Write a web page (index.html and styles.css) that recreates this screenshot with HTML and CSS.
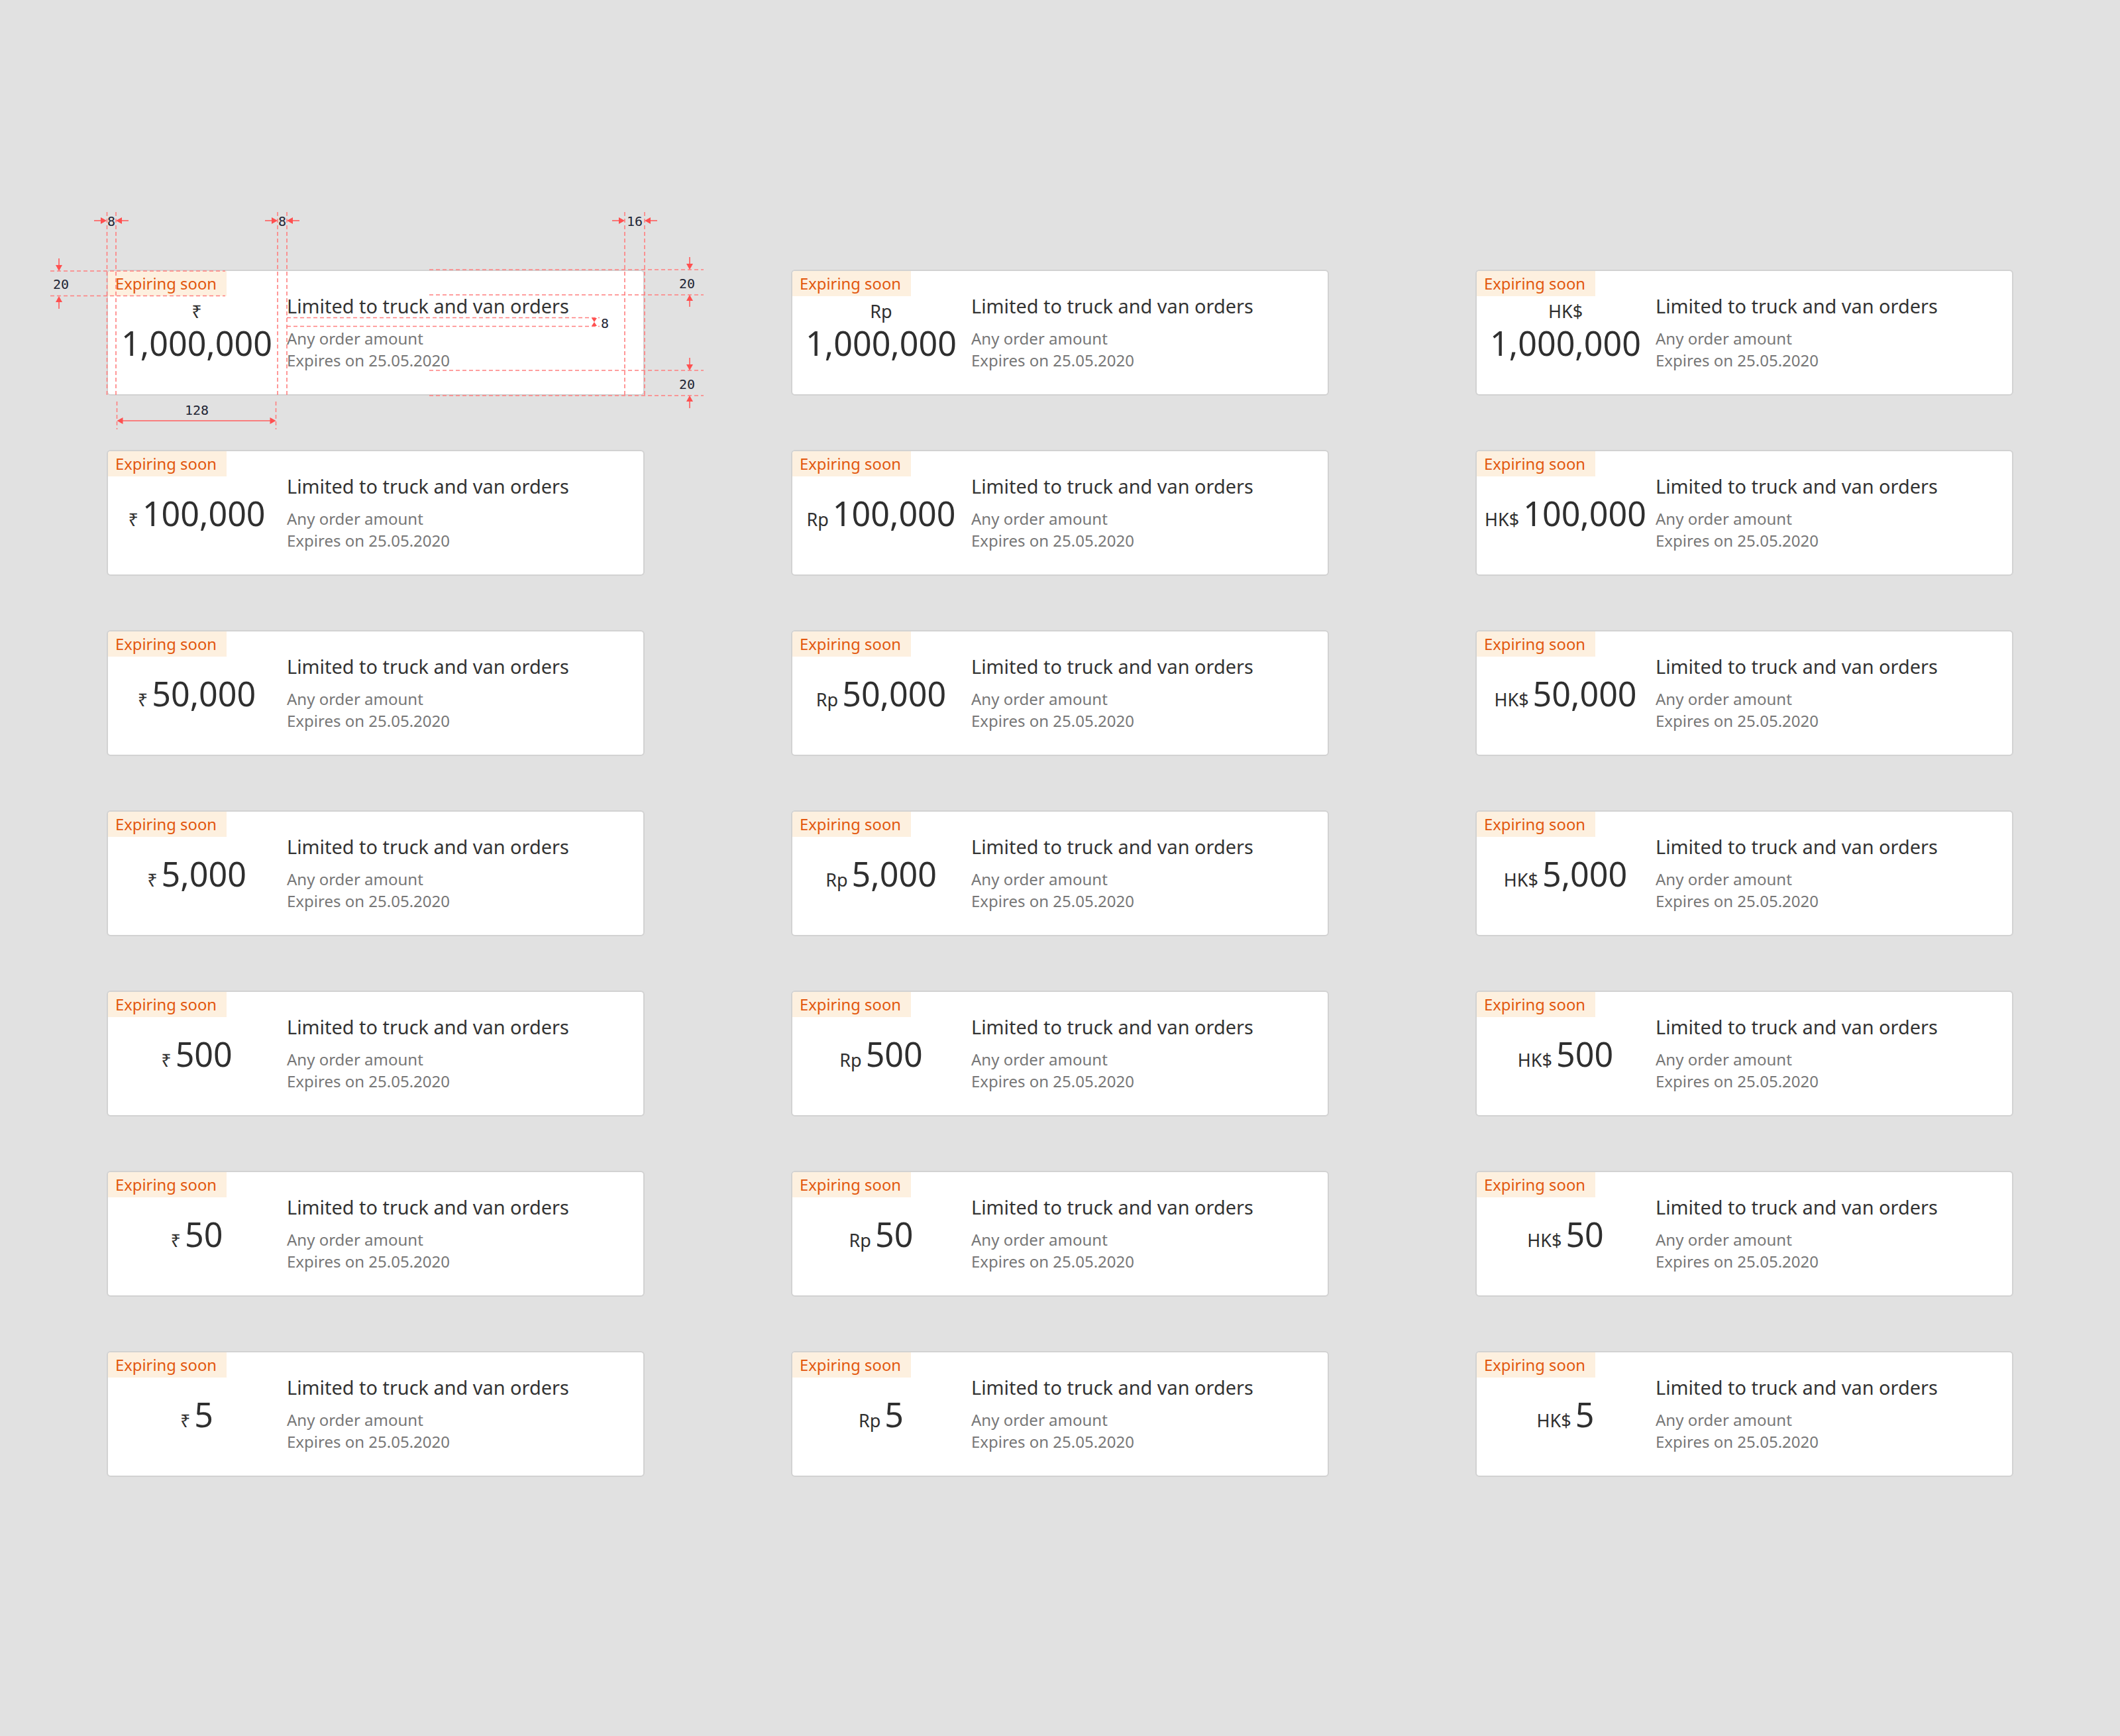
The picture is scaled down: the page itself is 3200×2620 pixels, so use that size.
FILE: index.html
```html
<!DOCTYPE html>
<html lang="en">
<head>
<meta charset="utf-8">
<title>Voucher cards</title>
<link rel="stylesheet" href="styles.css">
</head>
<body>
<main class="board">

  <div class="anno-wrap">
    <div class="card">
      <span class="tag">Expiring soon</span>
      <div class="amount stacked"><span class="cur">₹</span><span class="val">1,000,000</span></div>
      <div class="info"><div class="title">Limited to truck and van orders</div><div class="sub">Any order amount</div><div class="sub">Expires on 25.05.2020</div></div>
    </div>
    <svg class="anno" width="1010" height="360" viewBox="60 300 1010 360" xmlns="http://www.w3.org/2000/svg">
      <g class="dash">
        <line x1="161.5" y1="320" x2="161.5" y2="597"/>
        <line x1="175" y1="320" x2="175" y2="597"/>
        <line x1="419" y1="320" x2="419" y2="597"/>
        <line x1="433" y1="320" x2="433" y2="597"/>
        <line x1="943" y1="320" x2="943" y2="597"/>
        <line x1="973" y1="320" x2="973" y2="597"/>
        <line x1="176.5" y1="606" x2="176.5" y2="648"/>
        <line x1="416.5" y1="606" x2="416.5" y2="648"/>
        <line x1="76" y1="409" x2="340" y2="409"/>
        <line x1="76" y1="446.5" x2="340" y2="446.5"/>
        <line x1="648" y1="407" x2="1062" y2="407"/>
        <line x1="648" y1="445" x2="1062" y2="445"/>
        <line x1="648" y1="559" x2="1062" y2="559"/>
        <line x1="648" y1="597" x2="1062" y2="597"/>
        <line x1="433" y1="479.5" x2="905" y2="479.5"/>
        <line x1="433" y1="492.5" x2="905" y2="492.5"/>
      </g>
      <g class="arrow">
        <line x1="142" y1="333" x2="155" y2="333"/><polygon points="152,328 161,333 152,338"/>
        <line x1="194" y1="333" x2="181" y2="333"/><polygon points="184,328 175,333 184,338"/>
        <line x1="400" y1="333" x2="413" y2="333"/><polygon points="410,328 419,333 410,338"/>
        <line x1="452" y1="333" x2="439" y2="333"/><polygon points="442,328 433,333 442,338"/>
        <line x1="924" y1="333" x2="937" y2="333"/><polygon points="934,328 943,333 934,338"/>
        <line x1="992" y1="333" x2="979" y2="333"/><polygon points="982,328 973,333 982,338"/>
        <line x1="89" y1="390" x2="89" y2="403"/><polygon points="84,400 89,409 94,400"/>
        <line x1="89" y1="466" x2="89" y2="453"/><polygon points="84,456 89,447 94,456"/>
        <line x1="1041" y1="388" x2="1041" y2="401"/><polygon points="1036,398 1041,407 1046,398"/>
        <line x1="1041" y1="463" x2="1041" y2="451"/><polygon points="1036,454 1041,445 1046,454"/>
        <line x1="1041" y1="540" x2="1041" y2="553"/><polygon points="1036,550 1041,559 1046,550"/>
        <line x1="1041" y1="616" x2="1041" y2="603"/><polygon points="1036,606 1041,597 1046,606"/>
        <polygon points="893,480 901,480 897,486"/><polygon points="893,492 901,492 897,486"/>
        <line x1="183" y1="635" x2="410" y2="635"/>
        <polygon points="185.5,630 176.5,635 185.5,640"/><polygon points="407.5,630 416.5,635 407.5,640"/>
      </g>
      <g class="lbl">
        <text x="168" y="340.5">8</text>
        <text x="426" y="340.5">8</text>
        <text x="958" y="340.5">16</text>
        <text x="92" y="435.5">20</text>
        <text x="1037" y="434.5">20</text>
        <text x="1037" y="586.5">20</text>
        <text x="913" y="494.5">8</text>
        <text x="297" y="625.5">128</text>
      </g>
    </svg>
  </div>

  <div class="card">
    <span class="tag">Expiring soon</span>
    <div class="amount stacked"><span class="cur">Rp</span><span class="val">1,000,000</span></div>
    <div class="info"><div class="title">Limited to truck and van orders</div><div class="sub">Any order amount</div><div class="sub">Expires on 25.05.2020</div></div>
  </div>
  <div class="card">
    <span class="tag">Expiring soon</span>
    <div class="amount stacked"><span class="cur">HK$</span><span class="val">1,000,000</span></div>
    <div class="info"><div class="title">Limited to truck and van orders</div><div class="sub">Any order amount</div><div class="sub">Expires on 25.05.2020</div></div>
  </div>

  <div class="card">
    <span class="tag">Expiring soon</span>
    <div class="amount"><span class="cur">₹</span><span class="val">100,000</span></div>
    <div class="info"><div class="title">Limited to truck and van orders</div><div class="sub">Any order amount</div><div class="sub">Expires on 25.05.2020</div></div>
  </div>
  <div class="card">
    <span class="tag">Expiring soon</span>
    <div class="amount"><span class="cur">Rp</span><span class="val">100,000</span></div>
    <div class="info"><div class="title">Limited to truck and van orders</div><div class="sub">Any order amount</div><div class="sub">Expires on 25.05.2020</div></div>
  </div>
  <div class="card">
    <span class="tag">Expiring soon</span>
    <div class="amount"><span class="cur">HK$</span><span class="val">100,000</span></div>
    <div class="info"><div class="title">Limited to truck and van orders</div><div class="sub">Any order amount</div><div class="sub">Expires on 25.05.2020</div></div>
  </div>

  <div class="card">
    <span class="tag">Expiring soon</span>
    <div class="amount"><span class="cur">₹</span><span class="val">50,000</span></div>
    <div class="info"><div class="title">Limited to truck and van orders</div><div class="sub">Any order amount</div><div class="sub">Expires on 25.05.2020</div></div>
  </div>
  <div class="card">
    <span class="tag">Expiring soon</span>
    <div class="amount"><span class="cur">Rp</span><span class="val">50,000</span></div>
    <div class="info"><div class="title">Limited to truck and van orders</div><div class="sub">Any order amount</div><div class="sub">Expires on 25.05.2020</div></div>
  </div>
  <div class="card">
    <span class="tag">Expiring soon</span>
    <div class="amount"><span class="cur">HK$</span><span class="val">50,000</span></div>
    <div class="info"><div class="title">Limited to truck and van orders</div><div class="sub">Any order amount</div><div class="sub">Expires on 25.05.2020</div></div>
  </div>

  <div class="card">
    <span class="tag">Expiring soon</span>
    <div class="amount"><span class="cur">₹</span><span class="val">5,000</span></div>
    <div class="info"><div class="title">Limited to truck and van orders</div><div class="sub">Any order amount</div><div class="sub">Expires on 25.05.2020</div></div>
  </div>
  <div class="card">
    <span class="tag">Expiring soon</span>
    <div class="amount"><span class="cur">Rp</span><span class="val">5,000</span></div>
    <div class="info"><div class="title">Limited to truck and van orders</div><div class="sub">Any order amount</div><div class="sub">Expires on 25.05.2020</div></div>
  </div>
  <div class="card">
    <span class="tag">Expiring soon</span>
    <div class="amount"><span class="cur">HK$</span><span class="val">5,000</span></div>
    <div class="info"><div class="title">Limited to truck and van orders</div><div class="sub">Any order amount</div><div class="sub">Expires on 25.05.2020</div></div>
  </div>

  <div class="card">
    <span class="tag">Expiring soon</span>
    <div class="amount"><span class="cur">₹</span><span class="val">500</span></div>
    <div class="info"><div class="title">Limited to truck and van orders</div><div class="sub">Any order amount</div><div class="sub">Expires on 25.05.2020</div></div>
  </div>
  <div class="card">
    <span class="tag">Expiring soon</span>
    <div class="amount"><span class="cur">Rp</span><span class="val">500</span></div>
    <div class="info"><div class="title">Limited to truck and van orders</div><div class="sub">Any order amount</div><div class="sub">Expires on 25.05.2020</div></div>
  </div>
  <div class="card">
    <span class="tag">Expiring soon</span>
    <div class="amount"><span class="cur">HK$</span><span class="val">500</span></div>
    <div class="info"><div class="title">Limited to truck and van orders</div><div class="sub">Any order amount</div><div class="sub">Expires on 25.05.2020</div></div>
  </div>

  <div class="card">
    <span class="tag">Expiring soon</span>
    <div class="amount"><span class="cur">₹</span><span class="val">50</span></div>
    <div class="info"><div class="title">Limited to truck and van orders</div><div class="sub">Any order amount</div><div class="sub">Expires on 25.05.2020</div></div>
  </div>
  <div class="card">
    <span class="tag">Expiring soon</span>
    <div class="amount"><span class="cur">Rp</span><span class="val">50</span></div>
    <div class="info"><div class="title">Limited to truck and van orders</div><div class="sub">Any order amount</div><div class="sub">Expires on 25.05.2020</div></div>
  </div>
  <div class="card">
    <span class="tag">Expiring soon</span>
    <div class="amount"><span class="cur">HK$</span><span class="val">50</span></div>
    <div class="info"><div class="title">Limited to truck and van orders</div><div class="sub">Any order amount</div><div class="sub">Expires on 25.05.2020</div></div>
  </div>

  <div class="card">
    <span class="tag">Expiring soon</span>
    <div class="amount"><span class="cur">₹</span><span class="val">5</span></div>
    <div class="info"><div class="title">Limited to truck and van orders</div><div class="sub">Any order amount</div><div class="sub">Expires on 25.05.2020</div></div>
  </div>
  <div class="card">
    <span class="tag">Expiring soon</span>
    <div class="amount"><span class="cur">Rp</span><span class="val">5</span></div>
    <div class="info"><div class="title">Limited to truck and van orders</div><div class="sub">Any order amount</div><div class="sub">Expires on 25.05.2020</div></div>
  </div>
  <div class="card">
    <span class="tag">Expiring soon</span>
    <div class="amount"><span class="cur">HK$</span><span class="val">5</span></div>
    <div class="info"><div class="title">Limited to truck and van orders</div><div class="sub">Any order amount</div><div class="sub">Expires on 25.05.2020</div></div>
  </div>

</main>
</body>
</html>
```

FILE: styles.css
```css
html, body {
  margin: 0;
  padding: 0;
  background: #e1e1e1;
}

body {
  font-family: "Noto Sans", "DejaVu Sans", sans-serif;
  color: #333333;
  width: 3200px;
  min-height: 2620px;
}

.board {
  display: grid;
  grid-template-columns: repeat(3, 812px);
  column-gap: 221px;
  row-gap: 82px;
  padding: 407px 0 0 161px;
  align-items: start;
}

.anno-wrap {
  position: relative;
}

.card {
  position: relative;
  box-sizing: border-box;
  width: 812px;
  height: 190px;
  display: flex;
  gap: 14px;
  padding: 36px 28px 36px 12px;
  background: #ffffff;
  border: 2px solid #d2d2d2;
  border-radius: 6px;
  overflow: hidden;
}

.tag {
  position: absolute;
  top: 0;
  left: 0;
  width: 179px;
  height: 38px;
  box-sizing: border-box;
  padding-left: 11px;
  background: #fdf0df;
  color: #e2570e;
  font-size: 23.8px;
  line-height: 38px;
  white-space: nowrap;
}

.amount {
  flex: none;
  width: 244px;
  align-self: center;
  display: flex;
  align-items: baseline;
  justify-content: center;
  color: #2f2f2f;
}

.amount.stacked {
  flex-direction: column;
  align-items: center;
  margin-top: -4px;
}

.cur {
  font-size: 27px;
  line-height: 33px;
  margin-right: 6px;
}

.stacked .cur {
  margin: 0 0 2px 0;
}

.val {
  font-size: 50.2px;
  line-height: 59px;
}

.info {
  flex: 1;
  display: flex;
  flex-direction: column;
}

.title {
  font-size: 28.9px;
  line-height: 34px;
  color: #333333;
  margin-bottom: 16px;
  white-space: nowrap;
}

.sub {
  font-size: 24px;
  line-height: 32.5px;
  color: #777777;
  white-space: nowrap;
}

.anno {
  position: absolute;
  left: -101px;
  top: -107px;
  overflow: visible;
  pointer-events: none;
}

.anno .dash line {
  stroke: #ff7f7f;
  stroke-width: 1.6;
  stroke-dasharray: 6 4;
  fill: none;
}

.anno .arrow line {
  stroke: #ff5c5c;
  stroke-width: 1.6;
}

.anno .arrow polygon {
  fill: #ff5050;
}

.anno .lbl text {
  font-family: "DejaVu Sans Mono", "Liberation Mono", monospace;
  font-size: 20px;
  fill: #1f2535;
  text-anchor: middle;
}
```
